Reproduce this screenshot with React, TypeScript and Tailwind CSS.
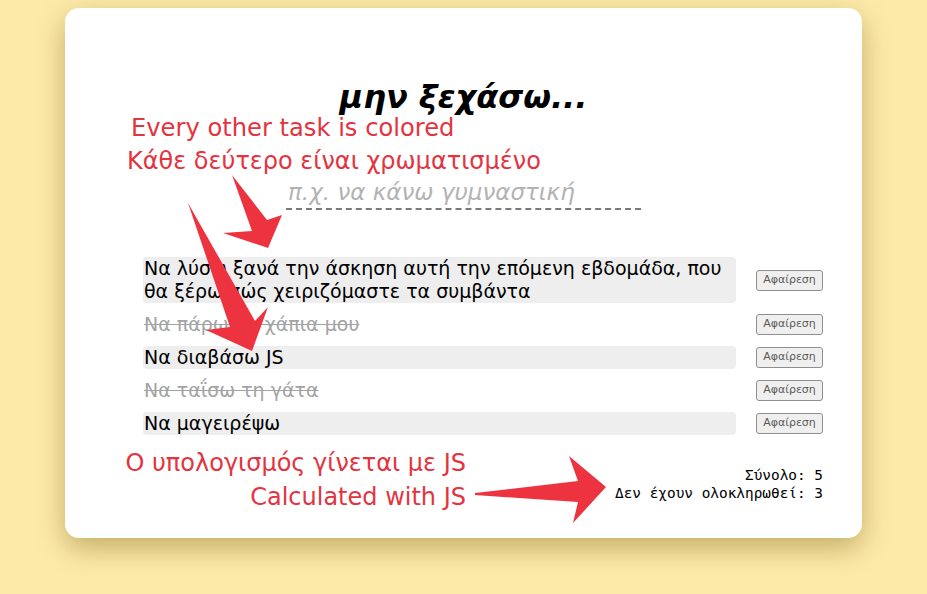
import React from 'react';

const tasks = [
  { text: 'Να λύσω ξανά την άσκηση αυτή την επόμενη εβδομάδα, που θα ξέρω πώς χειριζόμαστε τα συμβάντα', done: false },
  { text: 'Να πάρω τα χάπια μου', done: true },
  { text: 'Να διαβάσω JS', done: false },
  { text: 'Να ταΐσω τη γάτα', done: true },
  { text: 'Να μαγειρέψω', done: false },
];

const sans = { fontFamily: '"DejaVu Sans", sans-serif' };

export default function App() {
  const pending = tasks.filter((t) => !t.done).length;

  return (
    <div className="relative w-[927px] h-[594px] overflow-hidden bg-[#fdeaa9] pt-[8px]" style={sans}>
      {/* Card */}
      <div className="w-[797px] h-[530px] mx-auto bg-white rounded-[14px] shadow-[0_10px_28px_rgba(130,100,30,0.45)] px-[39px] pt-[70px] flex flex-col">
        <h1 className="text-[32px] leading-[38px] font-bold italic text-center text-black">μην ξεχάσω...</h1>

        <div className="flex justify-center mt-[60px]">
          <input
            className="w-[355px] h-[34px] border-b-2 border-dashed border-[#7a7a7a] outline-none text-[23px] italic pl-[2px] placeholder:text-[#b3b3b3]"
            style={sans}
            placeholder="π.χ. να κάνω γυμναστική"
          />
        </div>

        <ul className="mt-[47px] pl-[39px] flex flex-col gap-[10px]">
          {tasks.map((task, index) => (
            <li key={index} className="flex items-center gap-[20px]">
              <span
                className={
                  'flex-1 text-[19px] leading-[23px] pl-[1px] rounded-[4px] ' +
                  (index % 2 === 0 ? 'bg-[#eeeeee] ' : '') +
                  (task.done ? 'text-[#a3a3a3] line-through' : 'text-black')
                }
              >
                {task.text}
              </span>
              <button className="shrink-0 w-[67px] h-[21px] border border-[#8f8f8f] bg-[#efefef] rounded-[3px] text-[11px] text-[#5a5a5a]">
                Αφαίρεση
              </button>
            </li>
          ))}
        </ul>

        <div
          className="mt-[31px] text-right text-[14.4px] leading-[18px] text-black"
          style={{ fontFamily: '"DejaVu Sans Mono", monospace' }}
        >
          <div>Σύνολο: {tasks.length}</div>
          <div>Δεν έχουν ολοκληρωθεί: {pending}</div>
        </div>
      </div>

      {/* Annotations */}
      <div className="absolute left-[131px] top-[114px] text-[24.2px] leading-[28px] text-[#e3343f]">Every other task is colored</div>
      <div className="absolute left-[127px] top-[147px] text-[24px] leading-[28px] text-[#e3343f]">Κάθε δεύτερο είναι χρωματισμένο</div>
      <div className="absolute right-[461px] top-[449px] text-[24px] leading-[28px] text-[#e3343f] text-right">
        <div>Ο υπολογισμός γίνεται με JS</div>
        <div className="mt-[6px]">Calculated with JS</div>
      </div>

      <svg className="absolute inset-0 pointer-events-none" width="927" height="594" viewBox="0 0 927 594">
        <polygon fill="#ee3340" points="232,175 252,231 223,233 268,248 282,215 267,220" />
        <polygon fill="#ee3340" points="188,203 230,327 206,330 252,351 268,307 255,321" />
        <polygon fill="#ee3340" points="475,493 578,481 569,456 606,487 573,523 578,502 475,495" />
      </svg>
    </div>
  );
}
